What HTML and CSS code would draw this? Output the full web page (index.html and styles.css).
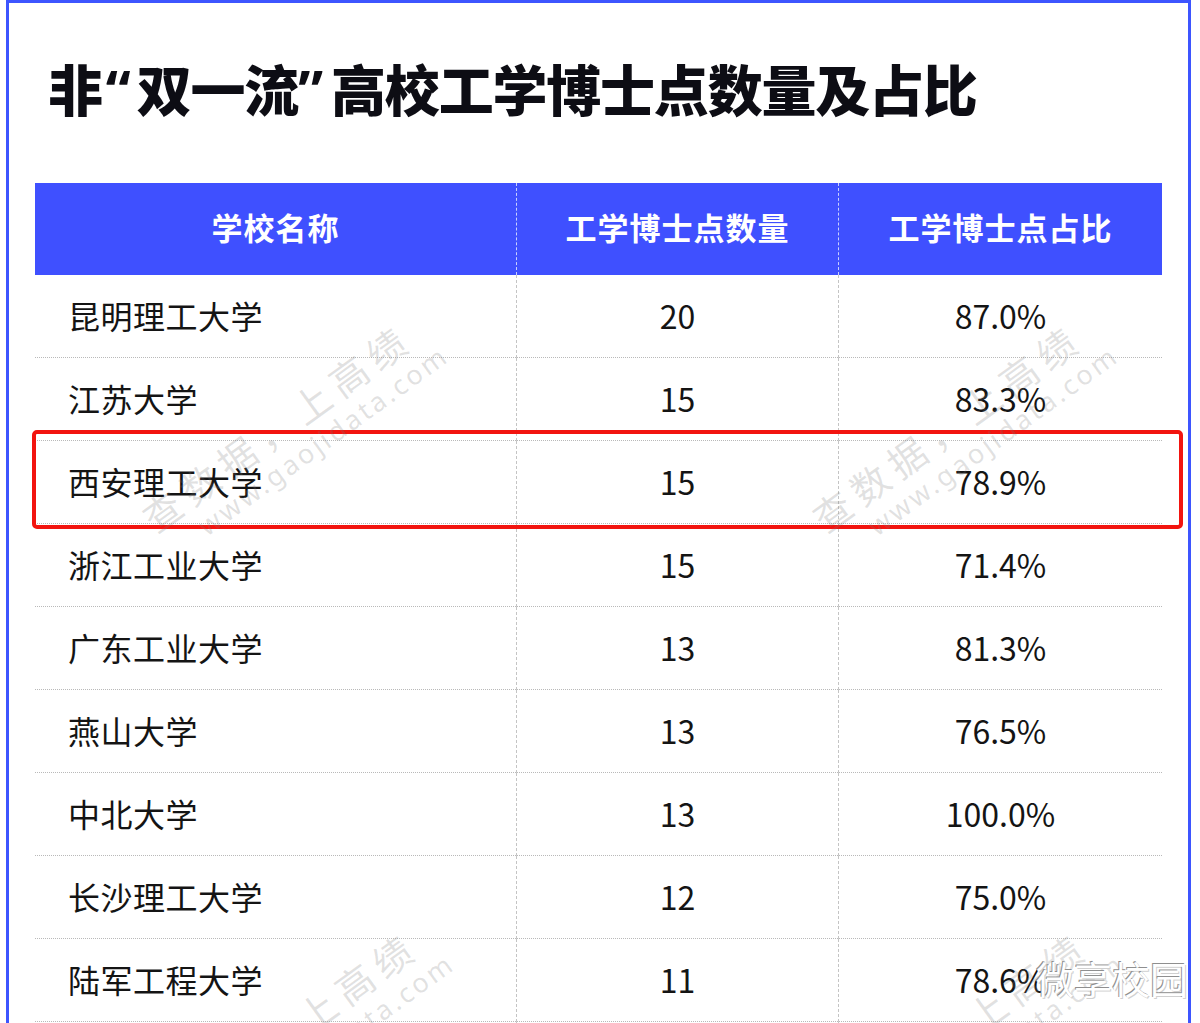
FILE: index.html
```html
<!DOCTYPE html>
<html lang="zh-CN">
<head>
<meta charset="utf-8">
<title>非“双一流”高校工学博士点数量及占比</title>
<link rel="stylesheet" href="styles.css">
</head>
<body>
<div class="frame">
  <h1 class="title">非<span class="q ql">“</span>双一流<span class="q qr">”</span>高校工学博士点数量及占比</h1>
  <div class="table">
    <div class="row head">
      <div class="cell">学校名称</div>
      <div class="cell">工学博士点数量</div>
      <div class="cell">工学博士点占比</div>
    </div>
    <div class="row"><div class="cell name">昆明理工大学</div><div class="cell">20</div><div class="cell">87.0%</div></div>
    <div class="row"><div class="cell name">江苏大学</div><div class="cell">15</div><div class="cell">83.3%</div></div>
    <div class="row"><div class="cell name">西安理工大学</div><div class="cell">15</div><div class="cell">78.9%</div></div>
    <div class="row"><div class="cell name">浙江工业大学</div><div class="cell">15</div><div class="cell">71.4%</div></div>
    <div class="row"><div class="cell name">广东工业大学</div><div class="cell">13</div><div class="cell">81.3%</div></div>
    <div class="row"><div class="cell name">燕山大学</div><div class="cell">13</div><div class="cell">76.5%</div></div>
    <div class="row"><div class="cell name">中北大学</div><div class="cell">13</div><div class="cell">100.0%</div></div>
    <div class="row"><div class="cell name">长沙理工大学</div><div class="cell">12</div><div class="cell">75.0%</div></div>
    <div class="row"><div class="cell name">陆军工程大学</div><div class="cell">11</div><div class="cell">78.6%</div></div>
    <div class="row"><div class="cell name"></div><div class="cell"></div><div class="cell"></div></div>
  </div>

  <div class="highlight"></div>

  <div class="wm wm1"><span class="wm-cn">查数据，上高绩</span><span class="wm-en">www.gaojidata.com</span></div>
  <div class="wm wm2"><span class="wm-cn">查数据，上高绩</span><span class="wm-en">www.gaojidata.com</span></div>
  <div class="wm wm3"><span class="wm-cn">查数据，上高绩</span><span class="wm-en">www.gaojidata.com</span></div>
  <div class="wm wm4"><span class="wm-cn">查数据，上高绩</span><span class="wm-en">www.gaojidata.com</span></div>

  <div class="brand">微享校园</div>
</div>
</body>
</html>
```
FILE: styles.css
```css
html, body {
  margin: 0;
  padding: 0;
  background: #ffffff;
  overflow: hidden;
}
body {
  width: 1200px;
  height: 1023px;
  font-family: "Noto Sans CJK SC", "Noto Sans", sans-serif;
  color: #151515;
}
.frame {
  position: relative;
  margin-left: 6px;
  width: 1127px;
  height: 1020px;
  border: 3px solid #3d55ff;
  border-bottom: none;
  padding: 0 26px;
  box-sizing: content-box;
  overflow: hidden;
}
.title {
  margin: 0;
  padding: 50px 0 0 13px;
  height: 180px;
  box-sizing: border-box;
  font-size: 55px;
  line-height: 68px;
  font-weight: 900;
  letter-spacing: -1.2px;
  color: #0d0d14;
  white-space: nowrap;
}
.q {
  font-family: "Noto Sans", "DejaVu Sans", sans-serif;
  font-weight: 700;
  font-size: 56px;
}
.ql {
  letter-spacing: 6px;
  margin-left: 4px;
}
.qr {
  letter-spacing: 8px;
  margin-left: 0;
}
.table {
  display: grid;
  grid-template-columns: 481px 322px 324px;
  width: 1127px;
}
.row {
  display: contents;
}
.cell {
  height: 83px;
  box-sizing: border-box;
  border-bottom: 1px dotted #b9b9b9;
  display: flex;
  align-items: center;
  justify-content: center;
  font-size: 32px;
  color: #141414;
  padding-bottom: 3px;
}
.row .cell + .cell {
  border-left: 1px dashed #c4c4c4;
}
.cell.name {
  justify-content: flex-start;
  padding-left: 33px;
  letter-spacing: 0.5px;
}
.head .cell {
  height: 92px;
  background: #3f50ff;
  color: #ffffff;
  font-weight: 700;
  font-size: 31px;
  letter-spacing: 1px;
  border-bottom: none;
  padding-bottom: 5px;
}
.row.head .cell + .cell {
  border-left: 1px dashed #c9d0ff;
}
.highlight {
  position: absolute;
  left: 23px;
  top: 427px;
  width: 1151px;
  height: 99px;
  border: 4px solid #f2140f;
  border-radius: 5px;
  box-sizing: border-box;
}
.wm {
  position: absolute;
  display: flex;
  flex-direction: column;
  transform-origin: 0 0;
  transform: rotate(-36deg);
  color: rgba(120, 120, 120, 0.22);
  pointer-events: none;
  white-space: nowrap;
}
.wm-cn {
  font-size: 38px;
  letter-spacing: 8px;
  line-height: 46px;
}
.wm-en {
  font-family: "Noto Sans", sans-serif;
  font-size: 27px;
  letter-spacing: 3px;
  line-height: 30px;
  margin-left: 40px;
}
.wm1 { left: 124px; top: 500px; }
.wm2 { left: 794px; top: 500px; }
.wm3 { left: 130px; top: 1108px; }
.wm4 { left: 800px; top: 1108px; }
.brand {
  position: absolute;
  left: 1027px;
  top: 951px;
  font-size: 38px;
  line-height: 48px;
  color: #ffffff;
  text-shadow: -1px -1px 0 #8f8f8f, 1px 1px 0 #d0d0d0;
}
```
